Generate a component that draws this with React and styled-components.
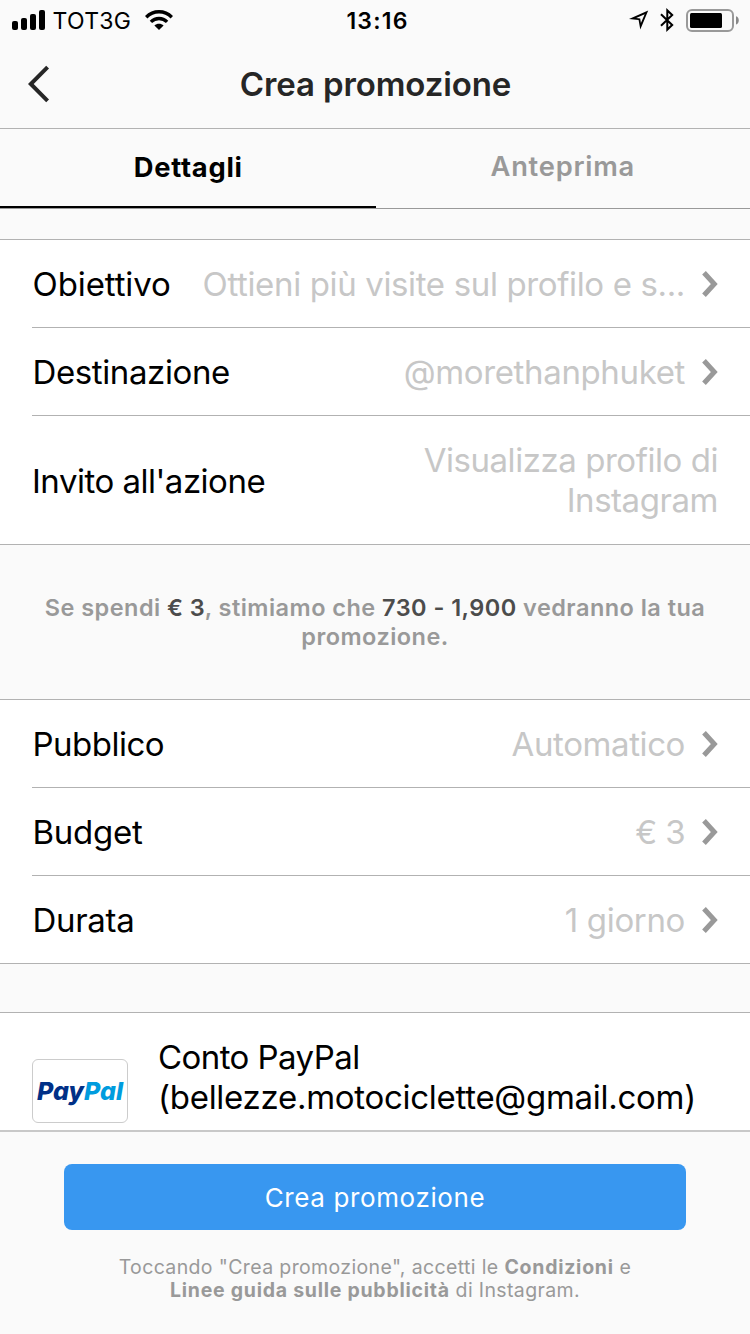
import React, { useState } from 'react';
import styled, { createGlobalStyle } from 'styled-components';

const GlobalStyle = createGlobalStyle`
  * {
    box-sizing: border-box;
  }

  body {
    margin: 0;
    background: #fafafa;
    font-family: 'Inter', sans-serif;
  }
`;

const Screen = styled.div`
  display: flex;
  flex-direction: column;
  width: 750px;
  height: 1334px;
  background: #fafafa;
  overflow: hidden;
`;

const StatusBar = styled.div`
  display: grid;
  grid-template-columns: 1fr auto 1fr;
  align-items: center;
  height: 40px;
  flex: none;
  padding: 0 11px 0 12px;
`;

const StatusGroup = styled.div`
  display: flex;
  align-items: center;
  justify-content: ${props => (props.$end ? 'flex-end' : 'flex-start')};

  svg {
    display: block;
    flex: none;
  }
`;

const Carrier = styled.span`
  margin: 1px 14px 0 6.5px;
  font-size: 23px;
  letter-spacing: 0.3px;
`;

const Clock = styled.span`
  margin: 1px 0 0 4px;
  font-size: 23px;
  font-weight: 600;
  letter-spacing: 1.2px;
`;

const Header = styled.header`
  display: grid;
  grid-template-columns: 80px 1fr 80px;
  align-items: center;
  height: 89px;
  flex: none;
  border-bottom: 1px solid #b2b2b2;
`;

const BackButton = styled.button`
  display: flex;
  padding: 0 0 0 28px;
  border: none;
  background: none;
  cursor: pointer;
`;

const HeaderTitle = styled.h1`
  margin: 0;
  padding-left: 1px;
  color: #262626;
  font-size: 33px;
  font-weight: 600;
  letter-spacing: -0.12px;
  text-align: center;
`;

const Tabs = styled.nav`
  display: flex;
  height: 80px;
  flex: none;
  border-bottom: 1px solid #999;
`;

const Tab = styled.button`
  flex: 1;
  padding: ${props => (props.$active ? '0 0 0 1px' : '0 0 2px')};
  border: none;
  border-bottom: 2px solid ${props => (props.$active ? '#000' : 'transparent')};
  background: none;
  color: ${props => (props.$active ? '#000' : '#999')};
  font-family: inherit;
  font-size: 27.3px;
  font-weight: ${props => (props.$active ? 700 : 600)};
  letter-spacing: 0.75px;
  cursor: pointer;
`;

const Content = styled.main`
  flex: 1;
  min-height: 0;
  padding-top: 30px;
  overflow: hidden;
`;

const Section = styled.section`
  padding-left: 32px;
  border-top: 1px solid #b2b2b2;
  border-bottom: 1px solid #b2b2b2;
  background: #fff;
`;

const Row = styled.div`
  box-sizing: content-box;
  display: flex;
  align-items: center;
  height: ${props => (props.$tall ? 128 : 87)}px;
  padding-right: 32px;
  border-top: ${props => (props.$first ? 'none' : '1px solid #b2b2b2')};
`;

const RowLabel = styled.span`
  flex: none;
  margin-top: ${props => (props.$tall ? 2 : 0)}px;
  margin-left: ${props => (props.$tall ? 0 : 0.5)}px;
  color: #000;
  font-size: 33px;
  line-height: 40px;
  letter-spacing: ${props => props.$track}px;
`;

const RowValue = styled.span`
  flex: 1;
  padding-left: 31px;
  color: #c7c7c7;
  font-size: 33px;
  line-height: 40px;
  letter-spacing: ${props => props.$track}px;
  text-align: right;
  white-space: pre-line;
`;

const RowArrow = styled.svg`
  display: block;
  flex: none;
  width: 16px;
  height: 26px;
  margin: 1px 0 0 17px;
`;

const Estimate = styled.p`
  margin: 0;
  padding: 48px 40px;
  color: #999;
  font-size: 23.5px;
  font-weight: 600;
  line-height: 29px;
  letter-spacing: 0.46px;
  text-align: center;

  strong {
    color: #4c4c4c;
    font-weight: 600;
  }
`;

const PaymentSection = styled(Section)`
  display: flex;
  align-items: flex-start;
  height: 160px;
  margin-top: 48px;
  padding-top: 24px;
`;

const PayPalCard = styled.div`
  display: flex;
  align-items: center;
  justify-content: center;
  width: 96px;
  height: 64px;
  flex: none;
  margin-top: 22px;
  border: 1px solid #ccc;
  border-radius: 6px;
  color: #009cde;
  font-size: 25px;
  font-style: italic;
  font-weight: 800;
  font-feature-settings: 'cv11';

  span {
    color: #003087;
  }
`;

const PaymentName = styled.div`
  margin-left: 30px;
  font-size: 33px;
  line-height: 40px;
  letter-spacing: -0.28px;

  span {
    display: block;
    letter-spacing: -0.56px;
  }
`;

const Footer = styled.footer`
  height: 204px;
  flex: none;
  padding: 32px 64px 0;
  border-top: 2px solid #c8c8c8;
  background: #fafafa;
`;

const PrimaryButton = styled.button`
  display: block;
  width: 100%;
  height: 66px;
  border: none;
  border-radius: 8px;
  background: #3897f0;
  color: #fff;
  font-family: inherit;
  font-size: 26px;
  letter-spacing: 0.63px;
  cursor: pointer;
`;

const Terms = styled.p`
  margin: 26px 0 0;
  color: #999;
  font-size: 19.5px;
  line-height: 23px;
  letter-spacing: 0.37px;
  text-align: center;

  strong {
    font-weight: 700;
    letter-spacing: 0.74px;
  }
`;

const targetRows = [
  { label: 'Obiettivo', labelTrack: -0.1, value: 'Ottieni più visite sul profilo e s...', track: -0.36, arrow: true },
  { label: 'Destinazione', labelTrack: -0.39, value: '@morethanphuket', track: -0.36, arrow: true },
  { label: "Invito all'azione", labelTrack: -0.5, value: 'Visualizza profilo di\nInstagram', track: -0.45, tall: true },
];

const budgetRows = [
  { label: 'Pubblico', labelTrack: -0.5, value: 'Automatico', track: -0.4, arrow: true },
  { label: 'Budget', labelTrack: -0.25, value: '€ 3', track: -0.6, arrow: true },
  { label: 'Durata', labelTrack: -0.3, value: '1 giorno', track: -0.35, arrow: true },
];

const SignalIcon = () => (
  <svg width="34" height="20" viewBox="0 0 34 20">
    <rect x="0" y="11" width="6" height="9" rx="2" />
    <rect x="9" y="8" width="6" height="12" rx="2" />
    <rect x="18" y="4" width="6" height="16" rx="2" />
    <rect x="27" y="0" width="6" height="20" rx="2" />
  </svg>
);

const WifiIcon = () => (
  <svg width="28" height="20" viewBox="0 0 28 20" fill="none" stroke="#000" strokeWidth="3.4">
    <path d="M1.2 7.2C8.4 0 19.6 0 26.8 7.2" />
    <path d="M5.9 11.9C10.5 7.4 17.5 7.4 22.1 11.9" />
    <path d="M14 20L9.4 15.4C11.9 13.1 16.1 13.1 18.6 15.4Z" fill="#000" stroke="none" />
  </svg>
);

const LocationIcon = () => (
  <svg width="20" height="20" viewBox="0 0 20 20">
    <path
      d="M19.2 0.6L0 8.9L9.6 9.9L11.3 19.6ZM15.7 4.3L11.9 12.9L11.2 8.5L7.2 8Z"
      fillRule="evenodd"
    />
  </svg>
);

const BluetoothIcon = () => (
  <svg width="14" height="24" viewBox="0 0 14 24" fill="none" stroke="#000" strokeWidth="2">
    <path d="M1 6.2L12.2 17L7.3 21.6V2.4L12.2 7L1 17.8" />
  </svg>
);

const BatteryIcon = () => (
  <svg width="53" height="24" viewBox="0 0 53 24">
    <rect x="1" y="2" width="46" height="21" rx="5" fill="none" stroke="#999" strokeWidth="2" />
    <rect x="4" y="5" width="32" height="15" rx="1.5" />
    <path d="M50 8.3C53.7 9.4 53.7 15.4 50 16.5Z" fill="#888" />
  </svg>
);

const StatusIcon = styled.span`
  margin-right: ${props => props.$gap}px;
`;

const ListRow = ({ row, first }) => (
  <Row $tall={row.tall} $first={first}>
    <RowLabel $tall={row.tall} $track={row.labelTrack}>{row.label}</RowLabel>
    <RowValue $track={row.track}>{row.value}</RowValue>
    {row.arrow && (
      <RowArrow viewBox="0 0 16 26">
        <path d="M2 1.8L12.3 13L2 24.2" fill="none" stroke="#999" strokeWidth="5" />
      </RowArrow>
    )}
  </Row>
);

const App = () => {
  const [tab, setTab] = useState('Dettagli');

  return (
    <>
      <GlobalStyle />
      <Screen>
        <StatusBar>
          <StatusGroup>
            <SignalIcon />
            <Carrier>TOT3G</Carrier>
            <WifiIcon />
          </StatusGroup>
          <Clock>13:16</Clock>
          <StatusGroup $end>
            <StatusIcon $gap={11}><LocationIcon /></StatusIcon>
            <StatusIcon $gap={12}><BluetoothIcon /></StatusIcon>
            <BatteryIcon />
          </StatusGroup>
        </StatusBar>

        <Header>
          <BackButton aria-label="Indietro">
            <svg width="22" height="38" viewBox="0 0 22 38">
              <path d="M19.6 2.2L2.8 19L19.6 35.8" fill="none" stroke="#262626" strokeWidth="4" />
            </svg>
          </BackButton>
          <HeaderTitle>Crea promozione</HeaderTitle>
        </Header>

        <Tabs>
          {['Dettagli', 'Anteprima'].map(name => (
            <Tab key={name} $active={tab === name} onClick={() => setTab(name)}>
              {name}
            </Tab>
          ))}
        </Tabs>

        <Content>
          <Section>
            {targetRows.map((row, i) => <ListRow key={row.label} row={row} first={i === 0} />)}
          </Section>

          <Estimate>
            Se spendi <strong>€ 3</strong>, stimiamo che <strong>730 - 1,900</strong> vedranno la tua promozione.
          </Estimate>

          <Section>
            {budgetRows.map((row, i) => <ListRow key={row.label} row={row} first={i === 0} />)}
          </Section>

          <PaymentSection>
            <PayPalCard><span>Pay</span>Pal</PayPalCard>
            <PaymentName>
              <span>Conto PayPal</span>
              (bellezze.motociclette@gmail.com)
            </PaymentName>
          </PaymentSection>
        </Content>

        <Footer>
          <PrimaryButton>Crea promozione</PrimaryButton>
          <Terms>
            Toccando "Crea promozione", accetti le <strong>Condizioni</strong> e<br />
            <strong>Linee guida sulle pubblicità</strong> di Instagram.
          </Terms>
        </Footer>
      </Screen>
    </>
  );
};

export default App;
